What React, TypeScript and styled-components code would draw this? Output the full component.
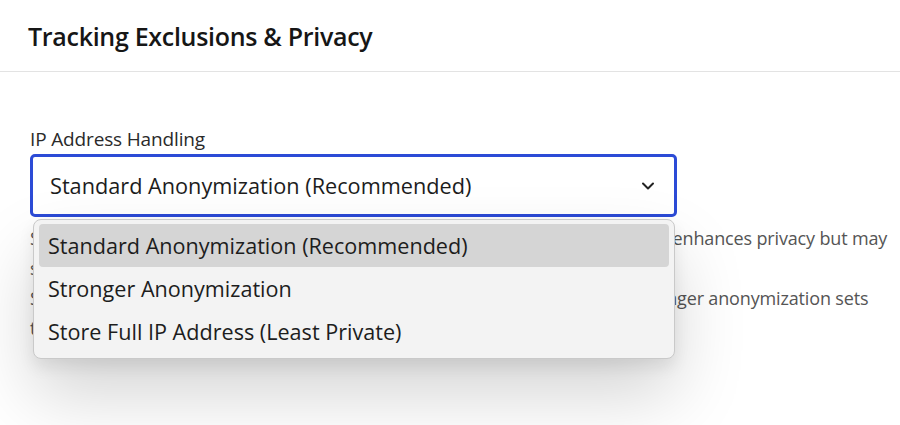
import React from 'react';
import styled, { createGlobalStyle } from 'styled-components';

const GlobalStyle = createGlobalStyle`
  html, body {
    margin: 0;
    background: #ffffff;
    font-family: 'Open Sans', 'Noto Sans', sans-serif;
    color: #1f1f1f;
  }
  #root {
    min-height: 425px;
    position: relative;
    overflow: hidden;
  }
`;

const Header = styled.header`
  height: 72px;
  box-sizing: border-box;
  display: flex;
  align-items: center;
  padding: 0 28px;
  border-bottom: 1px solid #e3e3e3;
`;

const Title = styled.h1`
  margin: 0;
  font-size: 25px;
  font-weight: 600;
  color: #161616;
  letter-spacing: -0.3px;
`;

const Body = styled.main`
  padding: 54px 30px 0;
`;

const Label = styled.label`
  display: block;
  font-size: 19px;
  color: #2a2a2a;
  margin-bottom: 2px;
  line-height: 26px;
  letter-spacing: -0.15px;
`;

const Field = styled.div`
  position: relative;
  width: 647px;
`;

const SelectBox = styled.div`
  height: 63px;
  box-sizing: border-box;
  border: 3px solid #2c4bd6;
  border-radius: 5px;
  display: flex;
  align-items: center;
  justify-content: space-between;
  padding: 0 18px 0 17px;
  font-size: 21.7px;
  color: #1d1d1d;
`;

const Chevron = () => (
  <svg width="16" height="16" viewBox="0 0 16 16" fill="none">
    <path d="M3 5.5 8 10.5 13 5.5" stroke="#222" strokeWidth="2" strokeLinecap="round" strokeLinejoin="round" />
  </svg>
);

const Menu = styled.ul`
  position: absolute;
  top: 65px;
  left: 3px;
  width: 642px;
  box-sizing: border-box;
  margin: 0;
  padding: 4px 5px 5px;
  list-style: none;
  background: #f3f3f3;
  border: 1px solid #c9c9c9;
  border-radius: 8px;
  box-shadow: 0 36px 70px rgba(0, 0, 0, 0.17), 0 8px 16px rgba(0, 0, 0, 0.08);
  z-index: 2;
`;

const Option = styled.li<{ $active?: boolean }>`
  height: 43px;
  display: flex;
  align-items: center;
  padding: 0 9px;
  border-radius: 4px;
  font-size: 21.6px;
  color: #1d1d1d;
  background: ${({ $active }) => ($active ? '#d5d5d5' : 'transparent')};
`;

const Help = styled.p`
  margin: 6px 0 0;
  font-size: 18px;
  line-height: 30px;
  color: #555;
  white-space: nowrap;
  letter-spacing: -0.15px;
`;

const options = [
  'Standard Anonymization (Recommended)',
  'Stronger Anonymization',
  'Store Full IP Address (Least Private)',
];

export default function App() {
  return (
    <>
      <GlobalStyle />
      <Header>
        <Title>Tracking Exclusions &amp; Privacy</Title>
      </Header>
      <Body>
        <Label>IP Address Handling</Label>
        <Field>
          <SelectBox>
            <span>{options[0]}</span>
            <Chevron />
          </SelectBox>
          <Menu>
            {options.map((o, i) => (
              <Option key={o} $active={i === 0}>
                {o}
              </Option>
            ))}
          </Menu>
        </Field>
        <Help>
          Standard anonymization masks the last octet of each visitor IP address, which enhances privacy but may
          <br />
          slightly reduce the accuracy of location reports.
          <br />
          Store the full address only when you need it for stricter security auditing. Stronger anonymization sets
          <br />
          the last two octets to zero before any data is saved.
        </Help>
      </Body>
    </>
  );
}
